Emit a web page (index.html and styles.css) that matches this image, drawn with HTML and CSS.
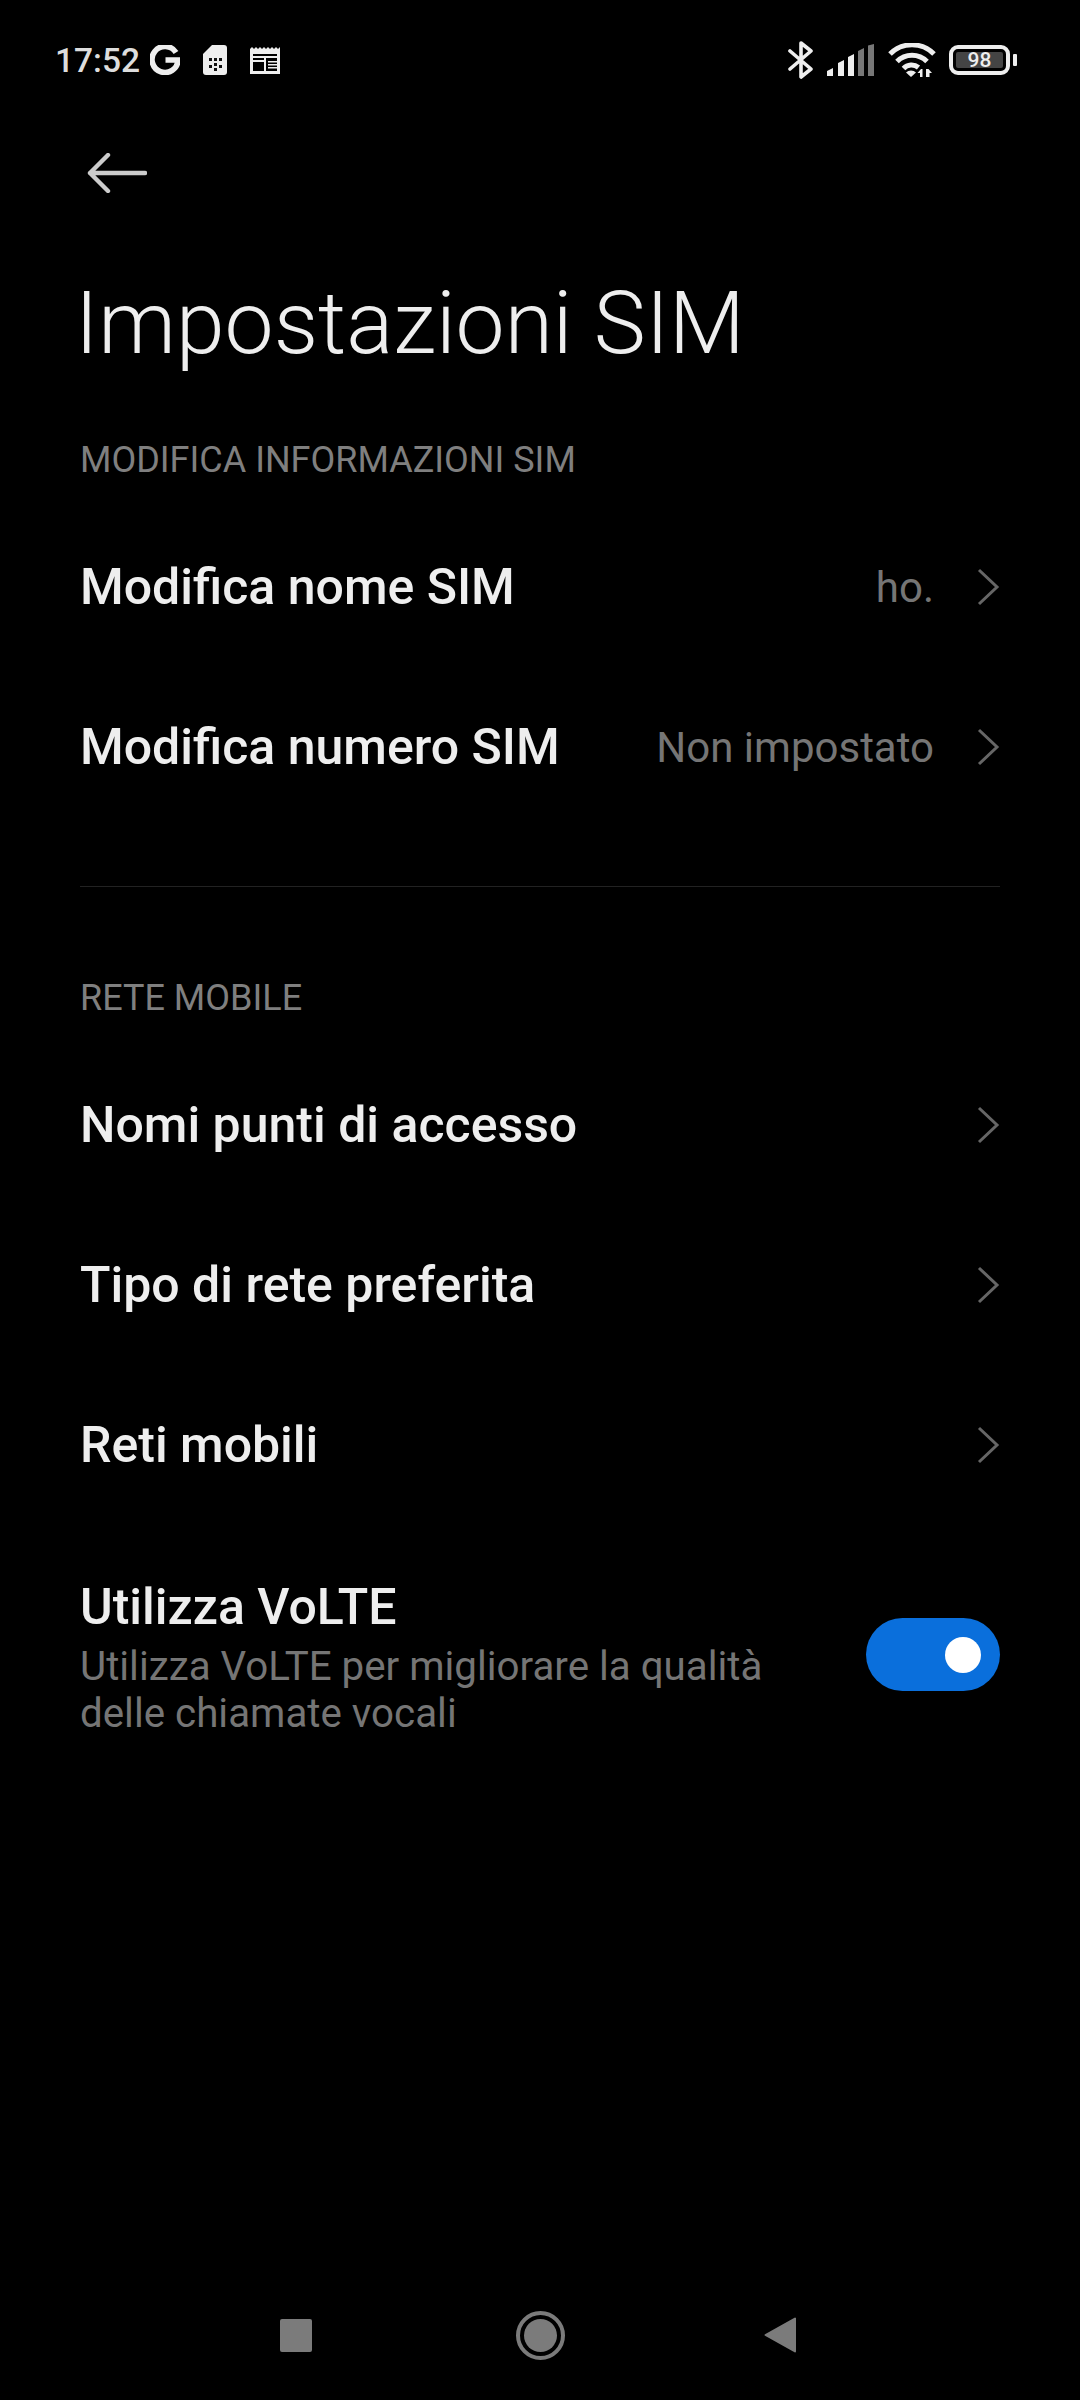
FILE: index.html
```html
<!DOCTYPE html>
<html lang="it">
<head>
<meta charset="utf-8">
<title>Impostazioni SIM</title>
<link rel="stylesheet" href="styles.css">
</head>
<body>
<div class="screen">
  <header class="status">
    <div class="status-left">
      <span class="time">17:52</span>
      <svg class="ic-g" viewBox="0 0 30 30"><path d="M26 7.500A13 13 0 1 0 28 15H15.500" fill="none" stroke="#eee" stroke-width="5.600"/></svg>
      <svg class="ic-sim" viewBox="0 0 24 30"><path d="M9 0H21a3 3 0 0 1 3 3V27a3 3 0 0 1-3 3H3a3 3 0 0 1-3-3V9Z" fill="#eee"/><path d="M6 13h3v3H6zM11 13h3v3h-3zM16 13h3v3h-3zM6 20h3v3H6zM11 18h3v3h-3zM11 23h3v3h-3zM16 20h3v3h-3z" fill="#111"/></svg>
      <svg class="ic-cal" viewBox="0 0 30 28"><path d="M0 3l2-2 2 2 2-2 2 2 2-2 2 2 2-2 2 2 2-2 2 2 2-2 2 2 2-2 2 2 2-2V28H0Z" fill="#eee"/><path d="M3 8h24v17H3z" fill="#000"/><path d="M3 10h24v2H3zM3 14h11v2H3zM14 12h2v13h-2zM18 15h9v1.600H18zM18 18h9v1.600H18zM18 21h9v1.600H18z" fill="#eee"/></svg>
    </div>
    <div class="status-right">
      <svg class="ic-bt" viewBox="0 0 26 38"><path d="M2 10l21 18-10 8V2l10 8L2 28" fill="none" stroke="#eee" stroke-width="3.600" stroke-linejoin="round" stroke-linecap="round"/></svg>
      <svg class="ic-signal" viewBox="0 0 48 32"><path d="M0 32v-5l6-3v8ZM11 32V19l6-3v16ZM21 32V13l6-3v22Z" fill="#eee"/><path d="M31 32V7l6-3v28ZM41 32V1.500L47 0v32Z" fill="#777"/></svg>
      <svg class="ic-wifi" viewBox="0 0 48 34"><path d="M2 11a31 31 0 0 1 44 0M9 18.500a21 21 0 0 1 30 0M15.500 25.500a11 11 0 0 1 15-1" fill="none" stroke="#eee" stroke-width="5"/><path d="M18 29.500a7 7 0 0 1 10 0L23 34Z" fill="#eee"/><path d="M33 26l-3.500 4h2.500v4h2.500v-8ZM38 26h2.500l3.500 4h-2.500v4H38Z" fill="#eee"/></svg>
      <div class="battery">
        <div class="batt-body"><span class="batt-fill">98</span></div>
        <span class="batt-tip"></span>
      </div>
    </div>
  </header>

  <div class="back">
    <svg class="ic-back" viewBox="0 0 60 40"><path d="M58 20H3M21 2 3 20l18 18" fill="none" stroke="#ccc" stroke-width="4.400" stroke-linecap="round" stroke-linejoin="round"/></svg>
  </div>

  <h1 class="title">Impostazioni SIM</h1>

  <main class="list">
    <h2 class="section">MODIFICA INFORMAZIONI SIM</h2>
    <div class="row">
      <span class="row-title">Modifica nome SIM</span>
      <span class="row-value">ho.</span>
      <svg class="chev" viewBox="0 0 24 40"><path d="M3 3l18 17L3 37" fill="none" stroke="#666" stroke-width="3"/></svg>
    </div>
    <div class="row">
      <span class="row-title">Modifica numero SIM</span>
      <span class="row-value">Non impostato</span>
      <svg class="chev" viewBox="0 0 24 40"><path d="M3 3l18 17L3 37" fill="none" stroke="#666" stroke-width="3"/></svg>
    </div>
    <hr class="divider">
    <h2 class="section section-second">RETE MOBILE</h2>
    <div class="row">
      <span class="row-title">Nomi punti di accesso</span>
      <svg class="chev" viewBox="0 0 24 40"><path d="M3 3l18 17L3 37" fill="none" stroke="#666" stroke-width="3"/></svg>
    </div>
    <div class="row">
      <span class="row-title">Tipo di rete preferita</span>
      <svg class="chev" viewBox="0 0 24 40"><path d="M3 3l18 17L3 37" fill="none" stroke="#666" stroke-width="3"/></svg>
    </div>
    <div class="row">
      <span class="row-title">Reti mobili</span>
      <svg class="chev" viewBox="0 0 24 40"><path d="M3 3l18 17L3 37" fill="none" stroke="#666" stroke-width="3"/></svg>
    </div>
    <div class="row-toggle">
      <div class="toggle-text">
        <div class="row-title">Utilizza VoLTE</div>
        <div class="row-sub">Utilizza VoLTE per migliorare la qualità delle chiamate vocali</div>
      </div>
      <div class="toggle"><span class="knob"></span></div>
    </div>
  </main>

  <nav class="navbar">
    <span class="nav-square"></span>
    <span class="nav-home"><span class="nav-home-dot"></span></span>
    <svg class="nav-back" viewBox="0 0 33 36"><path d="M31 1.500V34.500L1.500 18Z" fill="#7b7b7b" stroke="#7b7b7b" stroke-width="2" stroke-linejoin="round"/></svg>
  </nav>
</div>
</body>
</html>
```
FILE: styles.css
```css
* { box-sizing: border-box; }
html, body { margin: 0; padding: 0; background: #000; }
body { font-family: Roboto, "Noto Sans", sans-serif; color: #eee; }
.screen { width: 1080px; height: 2400px; display: flex; flex-direction: column; background: #000; }

.status { height: 120px; padding: 0 63px 0 55px; display: flex; justify-content: space-between; align-items: center; flex: none; }
.status-left, .status-right { display: flex; align-items: center; }
.time { font-size: 33.5px; font-weight: 500; color: #ddd; }
.ic-g { width: 30px; height: 30px; margin-left: 10px; }
.ic-sim { width: 24px; height: 30px; margin-left: 23px; }
.ic-cal { width: 30px; height: 28px; margin-left: 23px; }
.ic-bt { width: 26px; height: 38px; }
.ic-signal { width: 48px; height: 32px; margin-left: 13px; }
.ic-wifi { width: 48px; height: 34px; margin-left: 13px; }
.battery { display: flex; align-items: center; margin-left: 13px; }
.batt-body { width: 61px; height: 30px; border: 4px solid #eee; border-radius: 9px; padding: 3px; display: flex; }
.batt-fill { flex: 1; background: #444; border-radius: 2px; color: #eee; font-size: 21px; font-weight: 500; line-height: 16px; text-align: center; }
.batt-tip { width: 4px; height: 12px; background: #eee; margin-left: 3px; border-radius: 1px; }

.back { height: 134px; padding: 33px 0 0 87px; flex: none; }
.ic-back { width: 60px; height: 40px; display: block; }

.title { margin: 19px 0 0; padding-left: 75px; font-size: 87.6px; font-weight: 300; line-height: 100px; color: #eee; flex: none; }

.list { padding: 0 80px; flex: 1; }
.section { margin: 0; font-size: 36px; font-weight: 400; color: #7f7f7f; line-height: 40px; padding-top: 67px; }
.section-second { padding-top: 91px; }
.row { height: 160px; display: flex; align-items: center; }
.row:first-of-type { margin-top: 27px; }
.row-title { font-size: 50px; font-weight: 500; color: #eee; line-height: 56px; }
.row .row-title { flex: 1; }
.row-value { font-size: 42px; color: #757575; margin-right: 42px; }
.chev { width: 24px; height: 40px; flex: none; }
.divider { border: 0; border-top: 1px solid #222; margin: 59px 0 0; }
.section-second + .row { margin-top: 27px; }

.row-toggle { display: flex; align-items: center; justify-content: space-between; padding-top: 54px; }
.toggle-text { width: 720px; }
.row-sub { font-size: 40.3px; line-height: 47px; color: #757575; margin-top: 8px; }
.toggle { width: 134px; height: 73px; margin-bottom: 7px; border-radius: 37px; background: #0a6fdc; display: flex; align-items: center; justify-content: flex-end; padding-right: 19px; flex: none; }
.knob { width: 36px; height: 36px; border-radius: 50%; background: #fff; }

.navbar { height: 130px; flex: none; display: flex; align-items: center; padding: 0 283px 0 280px; justify-content: space-between; }
.nav-square { width: 32px; height: 33px; background: #7b7b7b; border-radius: 2px; }
.nav-home { width: 49px; height: 49px; margin-left: 4px; border: 4px solid #7b7b7b; border-radius: 50%; display: flex; align-items: center; justify-content: center; }
.nav-home-dot { width: 33px; height: 33px; border-radius: 50%; background: #7b7b7b; }
.nav-back { width: 33px; height: 36px; }
```
